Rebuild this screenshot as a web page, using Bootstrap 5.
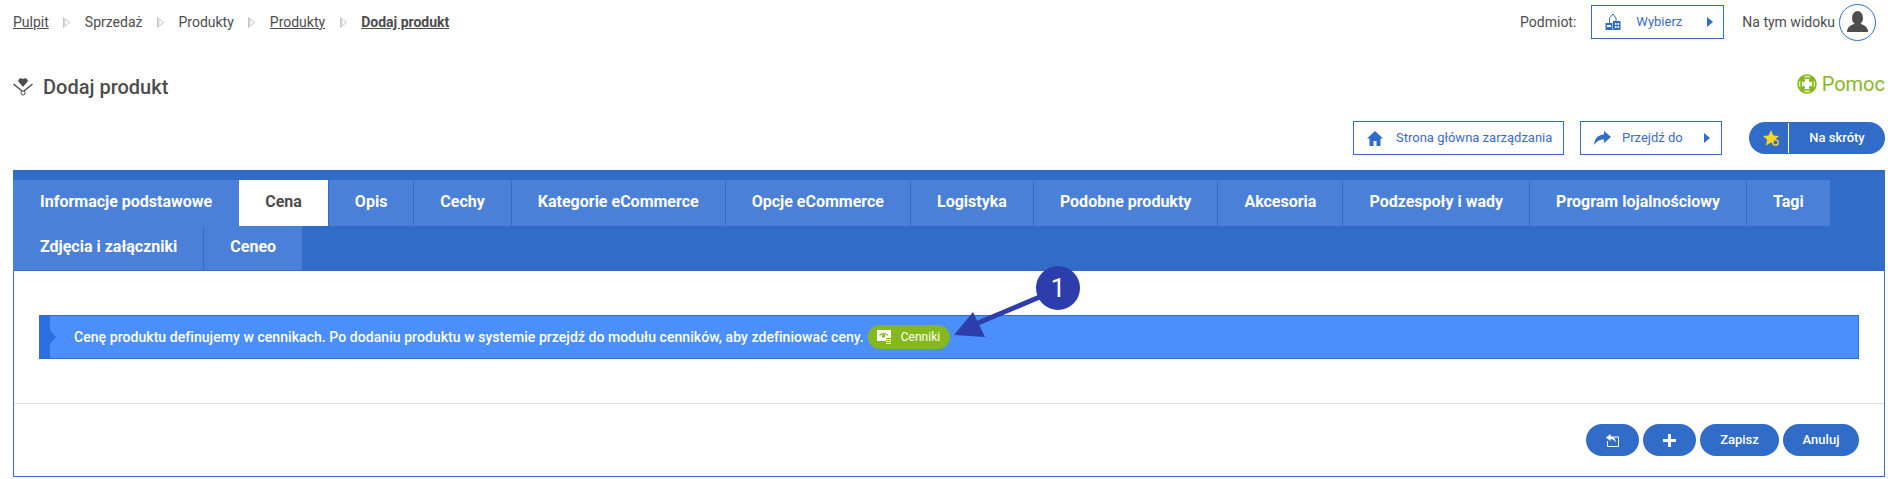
<!DOCTYPE html>
<html lang="pl">
<head>
<meta charset="utf-8">
<title>Dodaj produkt</title>
<link href="https://cdn.jsdelivr.net/npm/bootstrap@5.3.0/dist/css/bootstrap.min.css" rel="stylesheet">
<style>
html,body{height:479px;overflow:hidden;background:#fff}
body{font-family:Roboto,"Liberation Sans",sans-serif;font-size:14px;color:#4d4d4d;position:relative}
.page-wrap{padding:0 3px 0 13px}
.top-row{height:44px}
.crumbs{gap:14.500px}
.crumbs a{color:#4d4d4d}
.crumbs .cur{font-weight:700}
.plain-btn{display:inline-flex;align-items:center;height:34px;padding:0;border:1px solid #306cc8;border-radius:0;background:#fff;color:#3a6cc8;font-size:13px}
.plain-btn:hover{background:#fff;color:#3a6cc8;border-color:#306cc8}
.w-sel{width:133px;padding-left:13px}
.w-sel .lbl{margin-left:15px}
.w-sel .tri{margin-left:25px}
.w-home{width:211px;padding-left:13px}
.w-home .lbl{margin-left:13px}
.w-go{width:142px;padding-left:13px;margin-left:16px}
.w-go .lbl{margin-left:11px}
.w-go .tri{margin-left:21px}
.podmiot{margin-right:15px}
.viewlbl{margin:0 4px 0 18px}
.avatar{width:37px;height:37px;border:1px solid #306cc8;border-radius:50%;margin-right:9px}
.title-row{height:77px;position:relative}
.ttl{font-size:20px;font-weight:500;margin:0 0 0 10px;line-height:28px;color:#4d4d4d}
.title-left{padding-top:29px}
.help{color:#85b81f;font-size:20px;line-height:26px;padding-top:27px}
.help svg{margin-right:5px}
.action-row{height:49px}
.pill-group{display:flex;width:136px;height:32px;margin:1px 0 0 27px;background:#306cc8;border-radius:16px;color:#fff;overflow:hidden;font-weight:500;font-size:13px}
.pill-star{width:40px;display:flex;align-items:center;justify-content:center;padding-left:6px;border-right:1px solid #fff;margin:1px 0}
.pill-text{flex:1;text-align:center;line-height:32px}
.panel-box{height:307px;border:1px solid #306cc8;border-top:0;display:flex;flex-direction:column}
.tab-head{background:#306cc8;padding-top:10px;padding-right:40px;height:101px;margin:0 -1px 0 -1px}
.tab-item{display:block;height:46px;line-height:44px;padding:0 26px;background:#4b80d8;color:#fff;font-weight:700;font-size:16px;text-decoration:none;border-right:1px solid #306cc8;white-space:nowrap}
.tab-item:hover{color:#fff}
.tab-item.on{background:#fff;color:#4d4d4d}
.tab-item.first{padding-left:27px;padding-right:27px;border-right:0}
.tab-item.last{border-right:0}
.tab-item.low{height:44px;line-height:42px}
.tab-item.low.first{border-right:1px solid #306cc8;padding-right:26px}
.panel-main{height:133px;padding:44px 25px 0 25px;border-bottom:1px solid #e2e2e2}
.info-bar{height:44px;background:#4b8ffd;border:1px solid #2b70e0;color:#fff;font-weight:500;padding-left:34px;position:relative;letter-spacing:.06px}
.info-bar::before{content:"";position:absolute;left:0;top:0;bottom:0;width:10px;background:#2b70e0}
.info-bar::after{content:"";position:absolute;left:10px;top:14px;border-left:6px solid #2b70e0;border-top:7px solid transparent;border-bottom:7px solid transparent}
.price-btn{display:inline-flex;align-items:center;width:82px;height:24px;border-radius:12px;background:#85b81f;color:#fff;font-size:12px;font-weight:400;padding-left:9px;margin-left:4px;letter-spacing:0}
.price-btn .lbl{margin-left:9px}
.panel-foot{flex:1;padding:20px 25px 0 0;gap:4px}
.round-btn{height:32px;border-radius:16px;background:#306cc8;border:0;color:#fff;font-size:13px;font-weight:500;padding:0;display:inline-flex;align-items:center;justify-content:center}
.round-btn:hover{background:#306cc8;color:#fff}
.w53{width:53px}.w79{width:79px}.w76{width:76px}
.overlay-note{position:absolute;left:0;top:0;pointer-events:none}
.note-num{font-family:Roboto,sans-serif;font-size:26px;fill:#fff}
</style>
</head>
<body>
<div class="page-wrap">
  <div class="top-row d-flex justify-content-between align-items-center">
    <nav class="crumbs d-flex align-items-center">
      <a href="#">Pulpit</a>
      <svg width="7" height="11" viewBox="0 0 7 11"><path d="M.5.5 6.500 5.500.5 10.500Z" fill="#fff" stroke="#c4c4c4"/><path d="M1 1v9l1.500-1.200V2.500Z" fill="#d8d8d8"/></svg>
      <span>Sprzedaż</span>
      <svg width="7" height="11" viewBox="0 0 7 11"><path d="M.5.5 6.500 5.500.5 10.500Z" fill="#fff" stroke="#c4c4c4"/><path d="M1 1v9l1.500-1.200V2.500Z" fill="#d8d8d8"/></svg>
      <span>Produkty</span>
      <svg width="7" height="11" viewBox="0 0 7 11"><path d="M.5.5 6.500 5.500.5 10.500Z" fill="#fff" stroke="#c4c4c4"/><path d="M1 1v9l1.500-1.200V2.500Z" fill="#d8d8d8"/></svg>
      <a href="#">Produkty</a>
      <svg width="7" height="11" viewBox="0 0 7 11"><path d="M.5.5 6.500 5.500.5 10.500Z" fill="#fff" stroke="#c4c4c4"/><path d="M1 1v9l1.500-1.200V2.500Z" fill="#d8d8d8"/></svg>
      <a href="#" class="cur">Dodaj produkt</a>
    </nav>
    <div class="d-flex align-items-center">
      <span class="podmiot">Podmiot:</span>
      <button class="plain-btn w-sel" type="button">
        <svg width="16" height="18" viewBox="0 0 16 18"><path d="M4.500 10V5L8 1l3 4v5" fill="#fff" stroke="#3a6cc8"/><rect x="0.500" y="10" width="7" height="7" fill="#306cc8"/><rect x="8" y="8" width="7.500" height="9" fill="#306cc8"/><path d="M2 12h4v2H2zM10 10h1.500v2H10zM12.500 10H14v2h-1.500zM10 13h1.500v2H10zM12.500 13H14v2h-1.500z" fill="#fff"/></svg>
        <span class="lbl">Wybierz</span>
        <svg class="tri" width="6" height="10" viewBox="0 0 6 10"><path d="M0 0 6 5 0 10Z" fill="#306cc8"/></svg>
      </button>
      <span class="viewlbl">Na tym widoku</span>
      <div class="avatar d-flex align-items-center justify-content-center">
        <svg width="21" height="22" viewBox="0 0 21 22"><ellipse cx="10.500" cy="7" rx="5.500" ry="7" fill="#4d4d4d"/><path d="M0 21c0-5 4-7 7-8h7c3 1 7 3 7 8Z" fill="#4d4d4d"/></svg>
      </div>
    </div>
  </div>

  <div class="title-row d-flex justify-content-between align-items-start">
    <div class="title-left d-flex align-items-center">
      <svg width="20" height="18" viewBox="0 0 20 18"><path d="M10 1c1.500-1 3-1 4 0l1 2-5 6-5-6 1-2c1-1 2.500-1 4 0Z" fill="#4d4d4d"/><path d="M.5 6 9 13M19.500 6 11 13" stroke="#4d4d4d" stroke-width="1.500" fill="none"/><circle cx="10" cy="15" r="2" fill="none" stroke="#4d4d4d"/></svg>
      <h1 class="ttl">Dodaj produkt</h1>
    </div>
    <div class="help d-flex align-items-center">
      <svg width="20" height="20" viewBox="0 0 20 20"><circle cx="10" cy="10" r="7.500" fill="#fff" stroke="#85b81f" stroke-width="4.500"/><circle cx="10" cy="10" r="7.500" fill="none" stroke="#e4f2c0" stroke-width="1.300" stroke-dasharray="6 5.780" stroke-dashoffset="3"/><path d="M5.500 5.500 7.500 7.500M14.500 5.500 12.500 7.500M5.500 14.500 7.500 12.500M14.500 14.500 12.500 12.500" stroke="#85b81f" stroke-width="2.500"/></svg>
      <span>Pomoc</span>
    </div>
  </div>

  <div class="action-row d-flex justify-content-end align-items-start">
    <button class="plain-btn w-home" type="button">
      <svg width="16" height="15" viewBox="0 0 16 15"><path d="M8 0 16 7.500H13.500V15H9.500V10H6.500V15H2.500V7.500H0Z" fill="#306cc8"/></svg>
      <span class="lbl">Strona główna zarządzania</span>
    </button>
    <button class="plain-btn w-go" type="button">
      <svg width="17" height="14" viewBox="0 0 17 14"><path d="M10 0 17 6 10 12V8.500C5.500 8.500 3 10 0 14 .5 8 4 3.800 10 3.500Z" fill="#306cc8"/></svg>
      <span class="lbl">Przejdź do</span>
      <svg class="tri" width="6" height="10" viewBox="0 0 6 10"><path d="M0 0 6 5 0 10Z" fill="#306cc8"/></svg>
    </button>
    <div class="pill-group">
      <div class="pill-star">
        <svg width="17" height="17" viewBox="0 0 17 17"><path d="M8 0 10.400 5.400 16 6 11.800 9.800 13 15.500 8 12.600 3 15.500 4.200 9.800 0 6 5.600 5.400Z" fill="#fbd428"/><circle cx="12.500" cy="12.500" r="2.700" fill="#306cc8" stroke="#fbd428" stroke-width="1.300"/></svg>
      </div>
      <div class="pill-text">Na skróty</div>
    </div>
  </div>

  <div class="panel-box">
    <div class="tab-head">
      <nav class="d-flex flex-wrap">
        <a href="#" class="tab-item first">Informacje podstawowe</a>
        <a href="#" class="tab-item on">Cena</a>
        <a href="#" class="tab-item">Opis</a>
        <a href="#" class="tab-item">Cechy</a>
        <a href="#" class="tab-item">Kategorie eCommerce</a>
        <a href="#" class="tab-item">Opcje eCommerce</a>
        <a href="#" class="tab-item">Logistyka</a>
        <a href="#" class="tab-item">Podobne produkty</a>
        <a href="#" class="tab-item">Akcesoria</a>
        <a href="#" class="tab-item">Podzespoły i wady</a>
        <a href="#" class="tab-item">Program lojalnościowy</a>
        <a href="#" class="tab-item last">Tagi</a>
        <a href="#" class="tab-item low first">Zdjęcia i załączniki</a>
        <a href="#" class="tab-item low last">Ceneo</a>
      </nav>
    </div>
    <div class="panel-main">
      <div class="info-bar d-flex align-items-center">
        <span>Cenę produktu definujemy w cennikach. Po dodaniu produktu w systemie przejdź do modułu cenników, aby zdefiniować ceny.</span>
        <span class="price-btn">
          <svg width="15" height="15" viewBox="0 0 15 15"><rect x="0.500" y="0.500" width="13" height="10" fill="#fff" stroke="#fff"/><path d="M2.500 5.500C4 3 9 3 11 5.500" fill="none" stroke="#85b81f" stroke-width="1.200"/><circle cx="6.500" cy="6" r="1.700" fill="#85b81f"/><path d="M9 9h5M9 11h5M9 13h5" stroke="#85b81f" stroke-width="2.200"/><path d="M9 9.500h5M9 11.500h5M9 13.500h5" stroke="#fff" stroke-width="1"/></svg>
          <span class="lbl">Cenniki</span>
        </span>
      </div>
    </div>
    <div class="panel-foot d-flex justify-content-end align-items-start">
      <button class="round-btn w53" type="button" aria-label="Wróć">
        <svg width="13" height="13" viewBox="0 0 13 13"><path d="M4 3H12.500V12.500H1.500V7" fill="none" stroke="#fff"/><path d="M4.500 0 0 3.500 4.500 7V5C7 5 8.500 6 9.500 8.500 10 5 8 2.500 4.500 2.500Z" fill="#fff"/></svg>
      </button>
      <button class="round-btn w53" type="button" aria-label="Dodaj">
        <svg width="13" height="13" viewBox="0 0 13 13"><path d="M5 0H8V5H13V8H8V13H5V8H0V5H5Z" fill="#fff"/></svg>
      </button>
      <button class="round-btn w79" type="button">Zapisz</button>
      <button class="round-btn w76" type="button">Anuluj</button>
    </div>
  </div>
</div>
<svg class="overlay-note" width="1888" height="479" viewBox="0 0 1888 479">
  <path d="M1042 296 978 323" stroke="#2d3eac" stroke-width="5"/>
  <path d="M954 335 973 312 985 337Z" fill="#2d3eac"/>
  <circle cx="1058" cy="288" r="22" fill="#2d3eac"/>
  <text class="note-num" x="1058" y="297" text-anchor="middle">1</text>
</svg>
</body>
</html>
